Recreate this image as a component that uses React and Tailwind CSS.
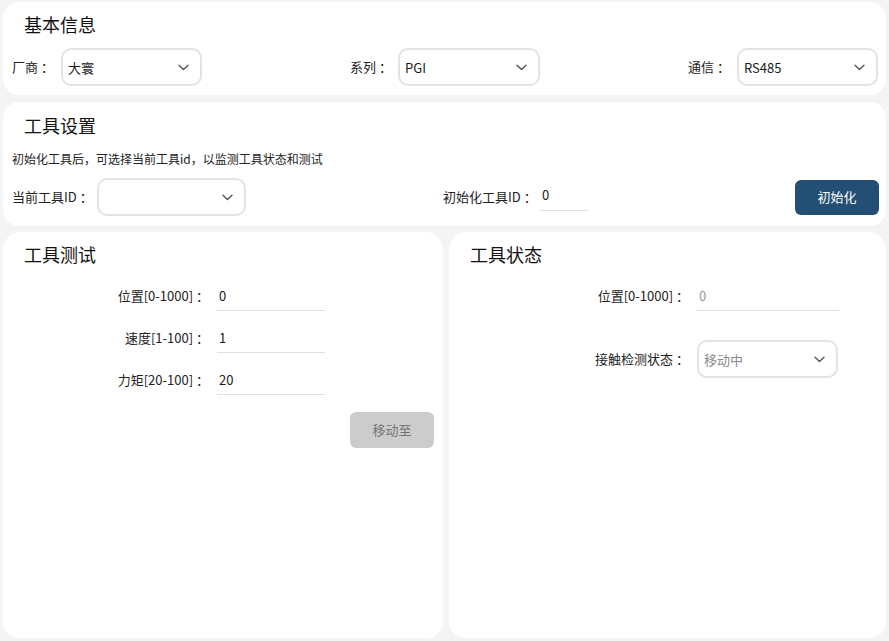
import React from "react";

const FONT = { fontFamily: '"Noto Sans CJK SC", "Noto Sans", sans-serif' };

function Chevron() {
  return (
    <svg width="11" height="7" viewBox="0 0 11 7" fill="none" className="shrink-0">
      <path d="M1 1.2 L5.5 5.5 L10 1.2" stroke="#555" strokeWidth="1.4" strokeLinecap="round" strokeLinejoin="round" />
    </svg>
  );
}

function Select({ value, width, muted }) {
  return (
    <div
      className={`h-[38px] ${width} shrink-0 rounded-[10px] border-2 border-[#e3e3e3] bg-white flex items-center justify-between pl-[5px] pr-[11px]`}
    >
      <span className={`text-[13px] leading-none ${muted ? "text-[#8a8a8a]" : "text-[#1a1a1a]"}`}>{value}</span>
      <Chevron />
    </div>
  );
}

function UnderInput({ value, width, muted }) {
  return (
    <div className={`h-[31px] ${width} shrink-0 border-b border-[#e0e0e0] flex items-center pl-[2px]`}>
      <span className={`text-[13px] leading-none ${muted ? "text-[#999]" : "text-[#1a1a1a]"}`}>{value}</span>
    </div>
  );
}

function Title({ children }) {
  return <div className="text-[18px] leading-[24px] text-[#111] pl-[21px]">{children}</div>;
}

export default function App() {
  return (
    <div style={FONT} className="w-[889px] h-[641px] bg-[#f4f4f4] flex flex-col px-[3px] pt-[2px] pb-[3px] overflow-hidden">
      {/* 基本信息 */}
      <div className="h-[93px] shrink-0 bg-white rounded-[16px] pt-[10px] pl-[9px] pr-[8px]">
        <div className="text-[18px] leading-[24px] text-[#111] pl-[12px]">基本信息</div>
        <div className="mt-[12px] flex items-center justify-between">
          <div className="flex items-center">
            <span className="w-[49px] text-[13px] text-[#222]">厂商 ：</span>
            <Select value="大寰" width="w-[141px]" />
          </div>
          <div className="flex items-center">
            <span className="w-[48px] text-[13px] text-[#222]">系列 ：</span>
            <Select value="PGI" width="w-[142px]" />
          </div>
          <div className="flex items-center">
            <span className="w-[49px] text-[13px] text-[#222]">通信 ：</span>
            <Select value="RS485" width="w-[141px]" />
          </div>
        </div>
      </div>

      {/* 工具设置 */}
      <div className="mt-[7px] h-[124px] shrink-0 bg-white rounded-[16px] pt-[11px] pl-[9px] pr-[7px]">
        <div className="text-[18px] leading-[24px] text-[#111] pl-[12px]">工具设置</div>
        <div className="mt-[13px] text-[12px] leading-[18px] text-[#222]">
          初始化工具后，可选择当前工具id，以监测工具状态和测试
        </div>
        <div className="mt-[10px] flex items-center">
          <div className="flex items-center">
            <span className="w-[85px] text-[13px] text-[#222]">当前工具ID ：</span>
            <Select value="" width="w-[149px]" />
          </div>
          <div className="ml-[197px] flex items-center">
            <span className="w-[97px] text-[13px] text-[#222]">初始化工具ID ：</span>
            <div className="-mt-[4px]">
              <UnderInput value="0" width="w-[48px]" />
            </div>
          </div>
          <button className="ml-auto h-[35px] w-[84px] rounded-[6px] bg-[#234f75] text-white text-[13px]">
            初始化
          </button>
        </div>
      </div>

      {/* bottom */}
      <div className="mt-[6px] flex-1 flex gap-[6px] min-h-0">
        <div className="w-[440px] bg-white rounded-t-[18px] rounded-b-[16px] pt-[10px]">
          <Title>工具测试</Title>
          <div className="mt-[14px] flex flex-col gap-[11px]">
            {[
              ["位置[0-1000] ：", "0"],
              ["速度[1-100] ：", "1"],
              ["力矩[20-100] ：", "20"],
            ].map(([l, v]) => (
              <div key={l} className="flex items-center">
                <span className="w-[206px] text-right text-[13px] text-[#222]">{l}</span>
                <div className="ml-[8px]">
                  <UnderInput value={v} width="w-[108px]" />
                </div>
              </div>
            ))}
          </div>
          <div className="mt-[17px] flex justify-end pr-[9px]">
            <button className="h-[36px] w-[84px] rounded-[6px] bg-[#cccccc] text-[#757575] text-[13px]">移动至</button>
          </div>
        </div>
        <div className="flex-1 bg-white rounded-t-[18px] rounded-b-[16px] pt-[10px]">
          <Title>工具状态</Title>
          <div className="mt-[14px] flex items-center">
            <span className="w-[240px] text-right text-[13px] text-[#222]">位置[0-1000] ：</span>
            <div className="ml-[8px]">
              <UnderInput value="0" width="w-[142px]" muted />
            </div>
          </div>
          <div className="mt-[29px] flex items-center">
            <span className="w-[240px] text-right text-[13px] text-[#222]">接触检测状态 ：</span>
            <div className="ml-[8px]">
              <Select value="移动中" width="w-[141px]" muted />
            </div>
          </div>
        </div>
      </div>
    </div>
  );
}
